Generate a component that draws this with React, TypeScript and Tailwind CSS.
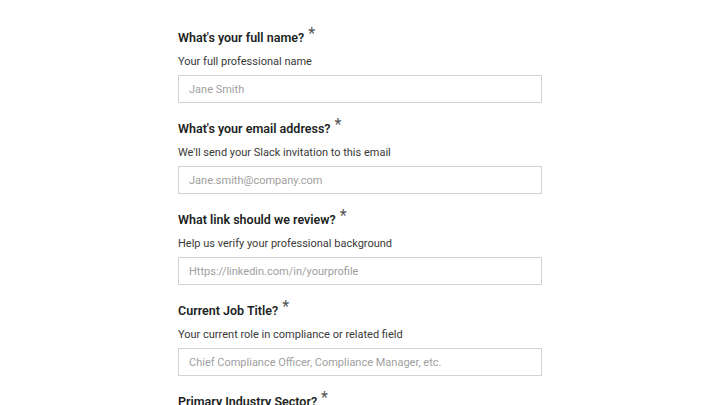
import React from "react";

const fields = [
  {
    label: "What's your full name?",
    hint: "Your full professional name",
    placeholder: "Jane Smith",
  },
  {
    label: "What's your email address?",
    hint: "We'll send your Slack invitation to this email",
    placeholder: "Jane.smith@company.com",
  },
  {
    label: "What link should we review?",
    hint: "Help us verify your professional background",
    placeholder: "Https://linkedin.com/in/yourprofile",
  },
  {
    label: "Current Job Title?",
    hint: "Your current role in compliance or related field",
    placeholder: "Chief Compliance Officer, Compliance Manager, etc.",
  },
  {
    label: "Primary Industry Sector?",
    hint: "The industry you currently work in",
    placeholder: "Financial Services",
  },
];

export default function App() {
  return (
    <div className="h-[405px] w-[720px] overflow-hidden bg-white font-['Roboto',sans-serif]">
      <form className="ml-[178px] flex w-[364px] flex-col gap-[15px] pt-[27px]">
        {fields.map((f) => (
          <div key={f.label} className="flex flex-col gap-1">
            <label className="h-5 text-[12.5px] leading-[19px] font-semibold text-[#1c1f23]">
              {f.label}
              <span className="relative -top-[3px] ml-[4px] text-[16px] font-normal text-[#555]">*</span>
            </label>
            <p className="h-5 text-[11px] leading-[22px] text-[#393939]">{f.hint}</p>
            <input
              type="text"
              placeholder={f.placeholder}
              className="h-7 w-full border border-[#d2d2d2] px-[10px] text-[11px] outline-none placeholder:text-[#a0a0a0]"
            />
          </div>
        ))}
      </form>
    </div>
  );
}
